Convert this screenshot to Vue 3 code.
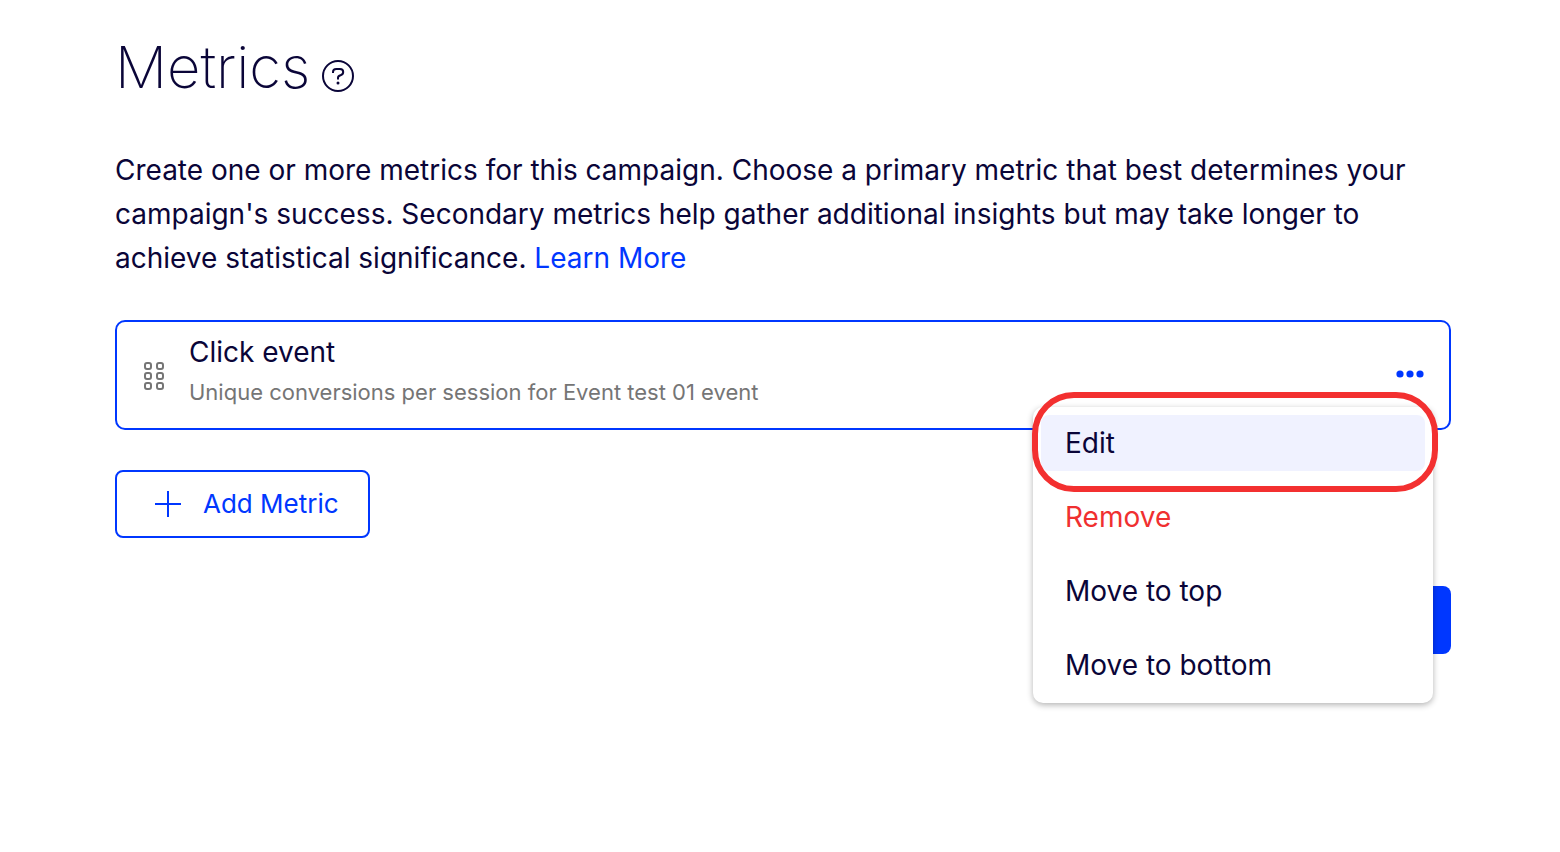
<script setup>
const actions = [
  { label: 'Edit', kind: 'active' },
  { label: 'Remove', kind: 'danger' },
  { label: 'Move to top', kind: '' },
  { label: 'Move to bottom', kind: '' },
]
const handles = [0, 1, 2, 3, 4, 5]
</script>

<template>
  <main class="page">
    <header class="heading">
      <h1>Metrics</h1>
      <button class="help" type="button" aria-label="Help">
        <svg width="34" height="34" viewBox="0 0 34 34" fill="none" stroke="currentColor" stroke-width="2">
          <circle cx="17" cy="17" r="15" />
          <path d="M12 14V13C12 11.200 13.500 10 15.300 10H18.900C20.800 10 22.200 11.300 22.200 13.100C22.200 14.900 21.200 15.800 19.600 16.200C17.700 16.700 17 17.400 17 18.800V20.500" />
          <circle cx="17" cy="24" r="1.500" fill="currentColor" stroke="none" />
        </svg>
      </button>
    </header>

    <p class="intro">
      Create one or more metrics for this campaign. Choose a primary metric that best determines your
      campaign's success. Secondary metrics help gather additional insights but may take longer to
      achieve statistical significance. <a href="#learn">Learn More</a>
    </p>

    <section class="metric">
      <svg class="grip" width="22" height="30" viewBox="0 0 22 30" fill="none" stroke="currentColor" stroke-width="2">
        <rect
          v-for="i in handles"
          :key="i"
          :x="2 + (i % 2) * 12"
          :y="3 + Math.floor(i / 2) * 10"
          width="6"
          height="6"
          rx="2"
        />
      </svg>
      <div class="details">
        <h2>Click event</h2>
        <p>Unique conversions per session for Event test 01 event</p>
      </div>
      <div class="more">
        <button class="dots" type="button" aria-label="Metric actions">
          <svg width="28" height="10" viewBox="0 0 28 10" fill="currentColor">
            <circle cx="4" cy="4" r="3.600" /><circle cx="14" cy="4" r="3.600" /><circle cx="24" cy="4" r="3.600" />
          </svg>
        </button>
        <div class="menu">
          <button v-for="a in actions" :key="a.label" type="button" :class="['item', a.kind]">{{ a.label }}</button>
          <div class="ring"></div>
        </div>
      </div>
    </section>

    <button class="add" type="button">
      <svg width="26" height="26" viewBox="0 0 26 26" stroke="currentColor" stroke-width="2" fill="none">
        <path d="M13 0V26M0 13H26" />
      </svg>
      Add Metric
    </button>

    <footer class="footer">
      <button class="next" type="button" aria-label="Next"></button>
    </footer>
  </main>
</template>

<style>
body {
  background: #fff;
}
</style>

<style scoped>
.page {
  box-sizing: border-box;
  min-height: 100vh;
  padding: 32px 109px 32px 115px;
  font-family: Inter, "Liberation Sans", sans-serif;
  color: #0a0538;
}
button {
  font: inherit;
  color: inherit;
  background: none;
  border: 0;
  padding: 0;
}
svg {
  display: block;
}
.heading {
  display: flex;
  align-items: center;
  gap: 11px;
}
h1 {
  margin: 0;
  font-size: 58px;
  line-height: 70px;
  font-weight: 200;
}
.help {
  margin-top: 18px;
}
.intro {
  margin: 46px 0 40px;
  font-size: 28px;
  line-height: 44px;
}
.intro a {
  color: #0037ff;
  text-decoration: none;
}
.metric {
  display: flex;
  align-items: center;
  box-sizing: border-box;
  min-height: 110px;
  padding: 8px 25px 8px 24px;
  border: 2px solid #0037ff;
  border-radius: 10px;
}
.grip {
  color: #757575;
  margin-left: 2px;
}
.details {
  flex: 1;
  margin-left: 24px;
  padding-bottom: 10px;
}
h2 {
  margin: 0;
  font-size: 28px;
  line-height: 44px;
  font-weight: 400;
}
.details p {
  margin: 0;
  font-size: 22px;
  line-height: 36px;
  color: #757575;
}
.more {
  position: relative;
  color: #0037ff;
}
.dots {
  display: block;
}
.menu {
  position: absolute;
  z-index: 1;
  top: 37px;
  right: -9px;
  display: flex;
  flex-direction: column;
  gap: 18px;
  box-sizing: border-box;
  width: 400px;
  padding: 8px 8px 10px;
  background: #fff;
  border-radius: 10px;
  box-shadow: 0 2px 6px rgba(0, 0, 0, 0.3);
  color: #0a0538;
}
.item {
  padding: 0 24px;
  border-radius: 8px;
  font-size: 28px;
  line-height: 56px;
  text-align: left;
}
.active {
  background: #f0f2ff;
}
.danger {
  color: #f03030;
}
.ring {
  position: absolute;
  top: -15px;
  left: -1px;
  right: -5px;
  height: 88px;
  border: 6px solid #f33030;
  border-radius: 42px;
}
.add {
  display: flex;
  align-items: center;
  gap: 22px;
  margin-top: 40px;
  padding: 0 29px 0 38px;
  border: 2px solid #0037ff;
  border-radius: 8px;
  font-size: 26px;
  line-height: 64px;
  color: #0037ff;
}
.footer {
  display: flex;
  justify-content: flex-end;
  margin-top: 48px;
}
.next {
  width: 160px;
  height: 68px;
  background: #0037ff;
  border-radius: 8px;
}
</style>
